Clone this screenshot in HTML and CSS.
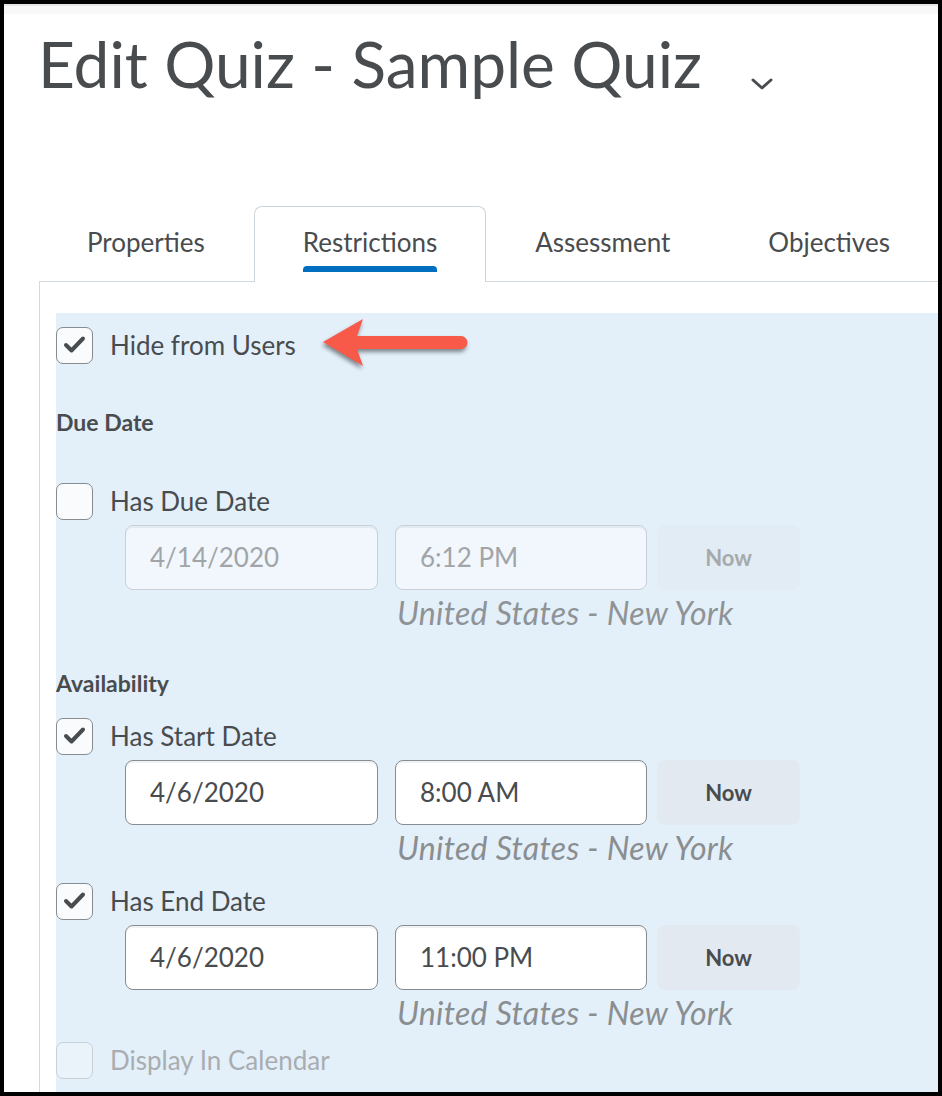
FILE: index.html
```html
<!DOCTYPE html>
<html lang="en">
  <head>
    <meta charset="UTF-8" />
    <meta name="viewport" content="width=device-width, initial-scale=1.0" />
    <title>Edit Quiz - Sample Quiz</title>
    <link rel="stylesheet" href="styles.css">
  </head>
  <body>
    <div class="frame">
      <div class="topbar"></div>
      <h1 class="page-title">
        Edit Quiz - Sample Quiz
        <svg class="title-caret" width="24" height="14" viewBox="0 0 24 14">
          <path d="M3 3 L12 11 L21 3" fill="none" stroke="#494c4e" stroke-width="3" stroke-linecap="round" stroke-linejoin="round" />
        </svg>
      </h1>

      <div class="tabs">
        <div class="tab">Properties</div>
        <div class="tab active">Restrictions<span class="tab-bar"></span></div>
        <div class="tab">Assessment</div>
        <div class="tab">Objectives</div>
      </div>

      <div class="panel">
        <div class="restrictions">
          <label class="check-row hide-row">
            <span class="box">
              <svg width="37" height="37" viewBox="0 0 37 37"><path d="M10 18 L15.5 23.5 L27 11.5" fill="none" stroke="#494c4e" stroke-width="4" stroke-linecap="round" stroke-linejoin="round" /></svg>
            </span>
            Hide from Users
            <!-- annotation arrow -->
            <svg class="callout-arrow" width="160" height="64" viewBox="0 0 160 64">
              <path d="M8 31 L48 8 L42 25 L146 25 A6.5 6.5 0 0 1 146 38 L42 38 L48 55 Z" fill="#f85a4a" />
            </svg>
          </label>

          <h2 class="section-title due-title">Due Date</h2>

          <label class="check-row due-row">
            <span class="box"></span>
            Has Due Date
          </label>
          <div class="date-row">
            <input class="field" type="text" value="4/14/2020" disabled />
            <input class="field" type="text" value="6:12 PM" disabled />
            <button class="now-btn" disabled>Now</button>
          </div>
          <div class="tz disabled-tz">United States - New York</div>

          <h2 class="section-title avail-title">Availability</h2>

          <label class="check-row start-row">
            <span class="box">
              <svg width="37" height="37" viewBox="0 0 37 37"><path d="M10 18 L15.5 23.5 L27 11.5" fill="none" stroke="#494c4e" stroke-width="4" stroke-linecap="round" stroke-linejoin="round" /></svg>
            </span>
            Has Start Date
          </label>
          <div class="date-row">
            <input class="field" type="text" value="4/6/2020" />
            <input class="field" type="text" value="8:00 AM" />
            <button class="now-btn">Now</button>
          </div>
          <div class="tz">United States - New York</div>

          <label class="check-row end-row">
            <span class="box">
              <svg width="37" height="37" viewBox="0 0 37 37"><path d="M10 18 L15.5 23.5 L27 11.5" fill="none" stroke="#494c4e" stroke-width="4" stroke-linecap="round" stroke-linejoin="round" /></svg>
            </span>
            Has End Date
          </label>
          <div class="date-row">
            <input class="field" type="text" value="4/6/2020" />
            <input class="field" type="text" value="11:00 PM" />
            <button class="now-btn">Now</button>
          </div>
          <div class="tz">United States - New York</div>

          <label class="check-row calendar-row disabled">
            <span class="box"></span>
            Display In Calendar
          </label>
        </div>
      </div>
    </div>
  </body>
</html>
```

FILE: styles.css
```css
html,
body {
  margin: 0;
  padding: 0;
  background: #000;
}
.frame {
  width: 942px;
  height: 1096px;
  box-sizing: border-box;
  border: 4px solid #000;
  background: #fff;
  overflow: hidden;
  font-family: Lato, "Open Sans", Arial, sans-serif;
  color: #494c4e;
}
.topbar {
  height: 8px;
  border-top: 2px solid #e6e7e8;
  background: #f8f8f8;
}

/* Title */
.page-title {
  margin: 12px 0 0 34px;
  font-size: 64px;
  font-weight: 400;
  line-height: 1.2;
  white-space: nowrap;
}
.title-caret {
  margin-left: 32px;
  vertical-align: -3px;
}

/* Tabs */
.tabs {
  display: flex;
  margin: 103px 0 0 34px;
  position: relative;
  z-index: 1;
}
.tab {
  display: flex;
  flex-direction: column;
  align-items: center;
  height: 75px;
  box-sizing: border-box;
  padding: 21px 48px 0;
  border: 1px solid transparent;
  border-bottom: none;
  font-size: 26px;
  line-height: 29px;
  white-space: nowrap;
}
.tab.active {
  background: #fff;
  border-color: #cdd5dc;
  border-radius: 8px 8px 0 0;
  margin-bottom: -1px;
  height: 76px;
}
.tab-bar {
  display: block;
  width: 100%;
  height: 6px;
  margin-top: 9px;
  background: #006fbf;
  border-radius: 4px 4px 0 0;
}

/* Panel */
.panel {
  margin-left: 35px;
  border-top: 1px solid #d3d9e0;
  border-left: 1px solid #d3d9e0;
  padding: 31px 0 0 16px;
  height: 900px;
}
.restrictions {
  background: #e3f0fa;
  padding: 15px 0 0 0;
  height: 100%;
}

.check-row {
  display: flex;
  align-items: center;
  gap: 17px;
  height: 37px;
  font-size: 26px;
  white-space: nowrap;
}
.hide-row {
  position: relative;
  top: -1px;
}
.box {
  width: 37px;
  height: 37px;
  box-sizing: border-box;
  border: 1px solid #868c8f;
  border-radius: 7px;
  background: #f9fbfd;
  flex-shrink: 0;
  position: relative;
}
.box svg {
  position: absolute;
  left: -1px;
  top: -1px;
}
.callout-arrow {
  position: absolute;
  left: 259px;
  top: -16px;
  filter: drop-shadow(-1px 3px 2px rgba(0, 0, 0, 0.45));
}

.section-title {
  margin: 0;
  font-size: 23px;
  font-weight: 700;
  line-height: 25px;
}
.due-title {
  margin-top: 45px;
}
.avail-title {
  margin-top: 41px;
}
.due-row {
  margin-top: 48px;
}
.start-row {
  margin-top: 22px;
}
.end-row {
  margin-top: 18px;
}
.calendar-row {
  margin-top: 12px;
}
.check-row.disabled {
  color: #a9adb0;
}
.check-row.disabled .box {
  border-color: #c8d0d8;
  background: #eaf3fa;
}

.date-row {
  display: flex;
  margin: 5px 0 0 69px;
}
.field {
  width: 253px;
  height: 65px;
  box-sizing: border-box;
  margin-right: 17px;
  padding: 0 24px;
  border: 1px solid #868c8f;
  border-radius: 8px;
  background: #fff;
  font-family: Lato, "Open Sans", Arial, sans-serif;
  font-size: 26px;
  color: #494c4e;
  box-shadow: inset 0 2px 0 rgba(181, 189, 194, 0.2);
}
.field:nth-child(2) {
  width: 252px;
  margin-right: 10px;
}
.field:disabled {
  background: #f1f7fc;
  border-color: #c9d0d6;
  color: #a1a5a8;
}
.now-btn {
  width: 143px;
  height: 65px;
  border: none;
  border-radius: 8px;
  background: #e3e9f1;
  font-family: Lato, "Open Sans", Arial, sans-serif;
  font-size: 22px;
  font-weight: 700;
  color: #494c4e;
}
.now-btn:disabled {
  background: #e2ecf4;
  color: #a6aaad;
}
.tz {
  margin: 6px 0 0 341px;
  font-size: 32px;
  font-style: italic;
  line-height: 34px;
  letter-spacing: 0.3px;
  color: #8a8e91;
  white-space: nowrap;
}
.disabled-tz {
  color: #8f9396;
}
```
